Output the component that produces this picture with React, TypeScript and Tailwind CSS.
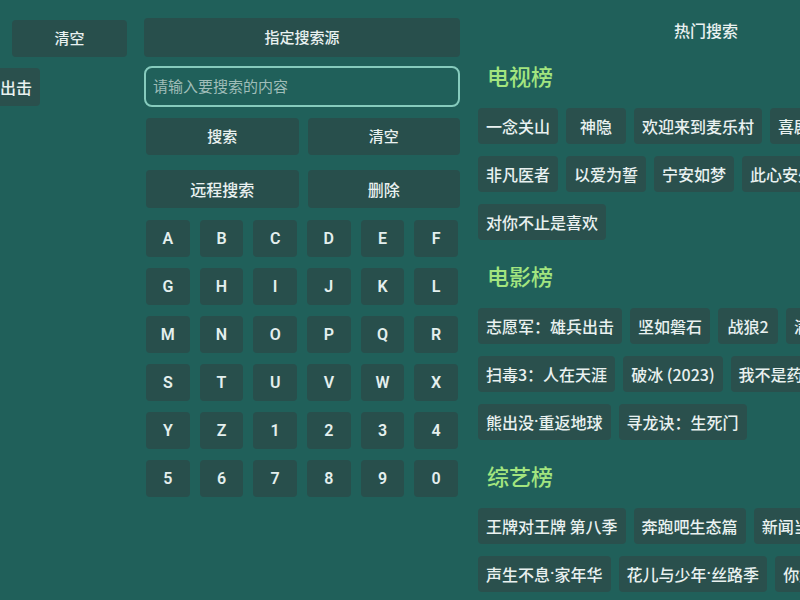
import React from "react";

const font = { fontFamily: '"Noto Sans CJK SC", "Noto Sans", sans-serif' };

const keys = "ABCDEFGHIJKLMNOPQRSTUVWXYZ1234567890".split("");

const sections: { title: string; rows: string[][] }[] = [
  {
    title: "电视榜",
    rows: [
      ["一念关山", "神隐", "欢迎来到麦乐村", "喜剧之王单口季"],
      ["非凡医者", "以爱为誓", "宁安如梦", "此心安处是吾乡"],
      ["对你不止是喜欢"],
    ],
  },
  {
    title: "电影榜",
    rows: [
      ["志愿军：雄兵出击", "坚如磐石", "战狼2", "满江红"],
      ["扫毒3：人在天涯", "破冰 (2023)", "我不是药神"],
      ["熊出没·重返地球", "寻龙诀：生死门"],
    ],
  },
  {
    title: "综艺榜",
    rows: [
      ["王牌对王牌 第八季", "奔跑吧生态篇", "新闻当事人"],
      ["声生不息·家年华", "花儿与少年·丝路季", "你好星期六"],
    ],
  },
];

function Btn({ children, className = "" }: { children: React.ReactNode; className?: string }) {
  return (
    <div
      className={
        "flex items-center justify-center rounded-[4px] bg-[#284f4c] text-[15px] font-medium text-[#e9f1f0] " +
        className
      }
    >
      {children}
    </div>
  );
}

function ChipText({ text }: { text: string }) {
  const parts = text.split("·");
  return (
    <>
      {parts.map((p, i) => (
        <React.Fragment key={i}>
          {i > 0 && <span className="font-['Roboto',sans-serif]">·</span>}
          {p}
        </React.Fragment>
      ))}
    </>
  );
}

function Chip({ children }: { children: string }) {
  return (
    <div className="flex h-[36px] min-w-[60px] shrink-0 items-center justify-center whitespace-nowrap rounded-[4px] bg-[#2a504d] px-[8px] text-[16px] font-medium text-[#e9f1f0]">
      <ChipText text={children} />
    </div>
  );
}

export default function App() {
  return (
    <div
      className="flex h-[600px] w-[800px] overflow-hidden bg-[#20605a]"
      style={font}
    >
      {/* left column */}
      <div className="flex w-[144px] shrink-0 flex-col pt-[20px]">
        <Btn className="ml-[12px] h-[37px] w-[115px]">清空</Btn>
        <div className="mt-[11px] flex h-[38px] w-[40px] justify-end overflow-hidden">
          <div className="flex h-[38px] shrink-0 items-center whitespace-nowrap rounded-[4px] bg-[#2a504d] px-[8px] text-[16px] font-medium text-[#e9f1f0]">
            雄兵出击
          </div>
        </div>
      </div>

      {/* middle column */}
      <div className="flex w-[316px] shrink-0 flex-col pt-[18px]">
        <Btn className="h-[39px] w-full">指定搜索源</Btn>
        <div className="mt-[9px] flex h-[41px] items-center rounded-[8px] border-2 border-[#86cbbd] px-[7px] text-[15px] text-[#9fbdb8]">
          请输入要搜索的内容
        </div>
        <div className="mt-[11px] flex gap-[9px] pl-[2px]">
          <Btn className="h-[37px] flex-1">搜索</Btn>
          <Btn className="h-[37px] flex-1">清空</Btn>
        </div>
        <div className="mt-[15px] flex gap-[9px] pl-[2px]">
          <Btn className="h-[38px] flex-1 text-[16px]">远程搜索</Btn>
          <Btn className="h-[38px] flex-1 text-[16px]">删除</Btn>
        </div>
        <div className="mt-[12px] grid grid-cols-6 gap-x-[10px] gap-y-[11px] pl-[2px] pr-[2px]">
          {keys.map((k) => (
            <div
              key={k}
              className="flex h-[37px] items-center justify-center rounded-[4px] bg-[#284f4c] font-['Roboto',sans-serif] text-[16px] font-semibold text-[#e4efee]"
            >
              {k}
            </div>
          ))}
        </div>
      </div>

      {/* right column */}
      <div className="ml-[18px] flex w-[456px] shrink-0 flex-col pt-[20px]">
        <div className="h-[20px] text-center text-[16px] font-medium leading-[20px] text-[#e9f1f0]">
          热门搜索
        </div>
        {sections.map((s) => (
          <div key={s.title} className="mt-[20px]">
            <div className="h-[30px] pl-[9px] text-[22px] font-medium leading-[30px] text-[#a3e57f]">
              {s.title}
            </div>
            <div className="mt-[18px] flex flex-col gap-[12px]">
              {s.rows.map((row, ri) => (
                <div key={ri} className="flex gap-[8px]">
                  {row.map((c) => (
                    <Chip key={c}>{c}</Chip>
                  ))}
                </div>
              ))}
            </div>
          </div>
        ))}
      </div>
    </div>
  );
}
